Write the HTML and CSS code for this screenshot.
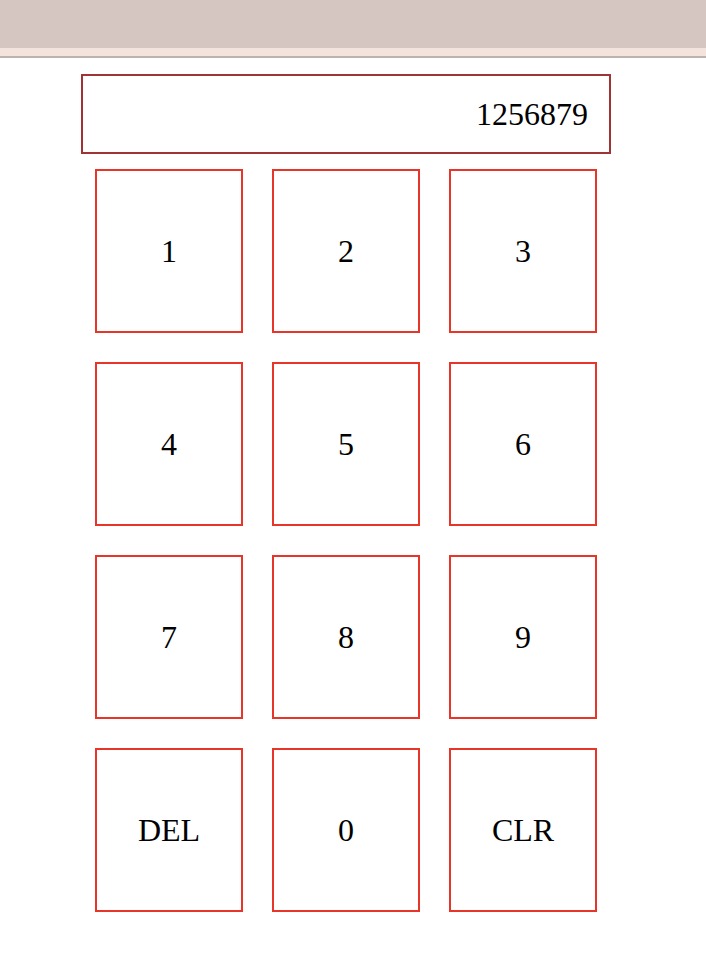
FILE: index.html
```html
<!DOCTYPE html>
<html>
<head>
<meta charset="utf-8">
<link rel="stylesheet" href="styles.css">
</head>
<body>
<header class="topbar"></header>
<div class="band"></div>
<main class="pad">
  <div class="display">1256879</div>
  <div class="keys">
    <button class="key">1</button>
    <button class="key">2</button>
    <button class="key">3</button>
    <button class="key">4</button>
    <button class="key">5</button>
    <button class="key">6</button>
    <button class="key">7</button>
    <button class="key">8</button>
    <button class="key">9</button>
    <button class="key">DEL</button>
    <button class="key">0</button>
    <button class="key">CLR</button>
  </div>
</main>
</body>
</html>
```
FILE: styles.css
```css
html, body {
  margin: 0;
  padding: 0;
  background: #ffffff;
  font-family: "Liberation Serif", "Times New Roman", serif;
  color: #000;
}
.topbar {
  height: 48px;
  background: #d5c6c2;
}
.band {
  height: 8px;
  background: #f4e2dc;
  border-bottom: 2px solid #bcb3b0;
}
.pad {
  padding-top: 16px;
  padding-left: 81px;
  width: 530px;
}
.display {
  box-sizing: border-box;
  width: 530px;
  height: 80px;
  border: 2px solid #a03333;
  display: flex;
  align-items: center;
  justify-content: flex-end;
  padding-right: 21px;
  font-size: 32px;
}
.keys {
  margin-top: 15px;
  margin-left: 14px;
  display: grid;
  grid-template-columns: repeat(3, 148px);
  grid-auto-rows: 164px;
  column-gap: 29px;
  row-gap: 29px;
}
.key {
  box-sizing: border-box;
  border: 2px solid #e8352a;
  background: #fff;
  font-family: "Liberation Serif", "Times New Roman", serif;
  font-size: 32px;
  color: #000;
  padding: 0;
  margin: 0;
  display: flex;
  align-items: center;
  justify-content: center;
}
```
